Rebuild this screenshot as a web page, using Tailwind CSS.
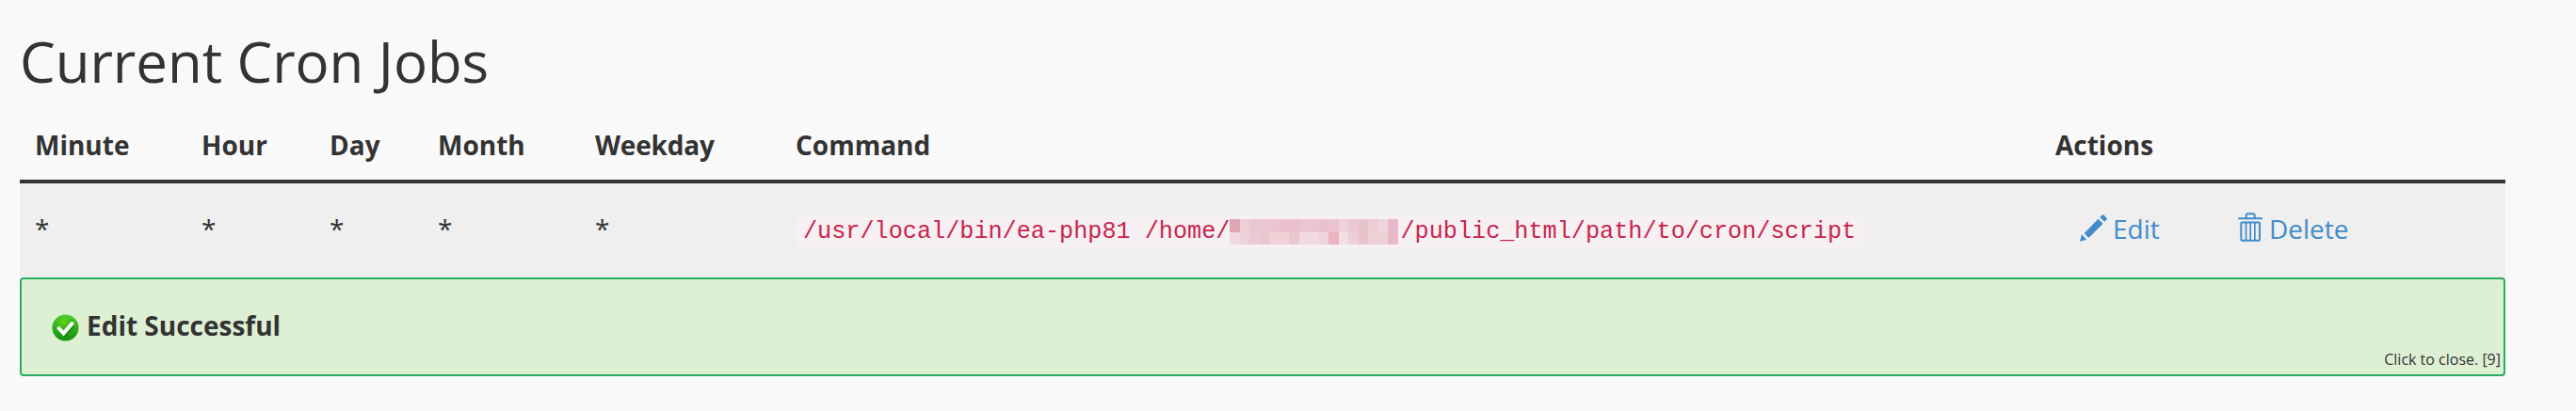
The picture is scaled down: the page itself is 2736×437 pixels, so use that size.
<!DOCTYPE html>
<html lang="en">
<head>
<meta charset="utf-8">
<title>Cron Jobs</title>
<script src="https://cdn.jsdelivr.net/npm/@tailwindcss/browser@4"></script>
</head>
<body class="bg-[#f9f9f9] text-[#333333] h-[437px] overflow-hidden pl-[21px] font-['Open_Sans',sans-serif] text-[28px] leading-[40px]">
<main class="w-[2640px] flex flex-col">
  <h1 class="h-[121px] pt-8 text-[60px] leading-[66px] tracking-[-0.08px] whitespace-nowrap">Current Cron Jobs</h1>
  <div class="h-[74px] pt-[13px] pl-4 border-b-4 border-[#333333] flex font-bold">
    <div class="w-[177px]">Minute</div>
    <div class="w-[136px]">Hour</div>
    <div class="w-[115px]">Day</div>
    <div class="w-[167px]">Month</div>
    <div class="w-[213px] tracking-[-0.2px]">Weekday</div>
    <div class="w-[1338px]">Command</div>
    <div>Actions</div>
  </div>
  <div class="h-[100px] pt-7 pl-4 bg-[#efefef] flex">
    <div class="w-[177px]">*</div>
    <div class="w-[136px]">*</div>
    <div class="w-[115px]">*</div>
    <div class="w-[167px]">*</div>
    <div class="w-[213px]">*</div>
    <div class="w-[1338px] pt-[5px] flex items-start">
      <code class="flex h-[37px] items-center px-2 rounded-lg bg-[#f7f0f2] text-[#c7254e] font-['Liberation_Mono',monospace] text-[25.2px] leading-[29px] whitespace-pre"><span>/usr/local/bin/ea-php81 /home/</span><svg class="w-[179px] h-[27px] mr-[2px]" viewBox="0 0 17 27" preserveAspectRatio="none" shape-rendering="crispEdges"><path fill="#eccad3" d="M0 0h17v27h-17z"/><path fill="#dfa5b3" d="M0 0h1v14h-1z"/><path fill="#eccfd7" d="M1 0h1v14h-1z"/><path fill="#ebc8d1" d="M2 0h1v14h-1z"/><path fill="#ebc5cf" d="M3 0h2v14h-2z"/><path fill="#e9c0cc" d="M5 0h2v14h-2z"/><path fill="#ebc6d0" d="M7 0h2v14h-2z"/><path fill="#e9c0cc" d="M9 0h1v14h-1z"/><path fill="#ebc4cf" d="M10 0h1v14h-1z"/><path fill="#eed2d9" d="M11 0h1v14h-1z"/><path fill="#ebc8d3" d="M12 0h1v14h-1z"/><path fill="#e9c3cc" d="M13 0h1v14h-1z"/><path fill="#edced6" d="M14 0h1v14h-1z"/><path fill="#eed6dd" d="M15 0h1v14h-1z"/><path fill="#efd9e0" d="M0 14h1v13h-1z"/><path fill="#eed2d9" d="M1 14h1v13h-1z"/><path fill="#eccad3" d="M2 14h1v13h-1z"/><path fill="#eac4ce" d="M3 14h1v13h-1z"/><path fill="#efd1d7" d="M4 14h2v13h-2z"/><path fill="#ebc5d0" d="M6 14h1v13h-1z"/><path fill="#f0dbe1" d="M7 14h2v13h-2z"/><path fill="#eed3da" d="M9 14h1v13h-1z"/><path fill="#e9b3c1" d="M10 14h1v13h-1z"/><path fill="#f2dfe5" d="M11 14h1v13h-1z"/><path fill="#edced7" d="M12 14h1v13h-1z"/><path fill="#e9c2cc" d="M13 14h1v13h-1z"/><path fill="#eed0d7" d="M14 14h2v13h-2z"/><path fill="#e8b9c8" d="M16 0h1v27h-1z"/></svg><span>/public_html/path/to/cron/script</span></code>
    </div>
    <div class="flex text-[#428bca]">
      <a class="flex w-[194px] pl-[26px] gap-[6px]"><svg class="w-[29px] h-[29px] mt-[5px]" viewBox="146 323 86 86" fill="currentColor"><path d="M160 382 202 339q2-2 4 0l11 11q2 2 0 4l-41 41q-2 2-4 0z"/><path d="M146 408 152 386q8 8 15 16z"/><path d="M209 332l6-6q4-4 8 0l7 8q3 3 0 6l-6 6z"/></svg><span>Edit</span></a>
      <a class="flex gap-[7px]"><svg class="w-[26px] h-[31px] mt-[3px]" viewBox="650 317 78 92" fill="none" stroke="currentColor" stroke-width="6"><path d="M651 335H728M676 335V326q0-6 6-6H697q6 0 6 6V335"/><rect x="660" y="348" width="59" height="58" rx="3"/><path stroke-width="5" d="M675.5 348V405M689.5 348V405M703.5 348V405"/></svg><span>Delete</span></a>
    </div>
  </div>
  <div class="h-[105px] border-2 border-[#27ae60] rounded bg-[#def0d4] flex justify-between">
    <div class="flex pt-[29px] pl-8 gap-2 font-bold"><svg class="w-[29px] h-[29px] mt-2" viewBox="0 0 29 29"><defs><linearGradient id="g" x1="0" y1="0" x2="0" y2="1"><stop offset="0" stop-color="#52cd3c"/><stop offset=".5" stop-color="#2fae1c"/><stop offset="1" stop-color="#15920f"/></linearGradient><radialGradient id="h" cx=".42" cy=".22" r=".55"><stop offset="0" stop-color="#66d116"/><stop offset="1" stop-color="#2fae1c" stop-opacity="0"/></radialGradient></defs><circle cx="14.500" cy="14.500" r="14" fill="url(#g)"/><circle cx="14.500" cy="14.500" r="12" fill="url(#h)"/><path d="M9 18l4.500 4.500 9.500-10.500" fill="none" stroke="#126c0c" stroke-opacity=".45" stroke-width="4.200"/><path d="M7.500 15l5 5.500L21.500 10" fill="none" stroke="#fff" stroke-width="4" stroke-linecap="round"/></svg><span>Edit Successful</span></div>
    <div class="self-end text-base leading-[22px] pr-[3px] pb-[5px]">Click to close. [9]</div>
  </div>
</main>
</body>
</html>
